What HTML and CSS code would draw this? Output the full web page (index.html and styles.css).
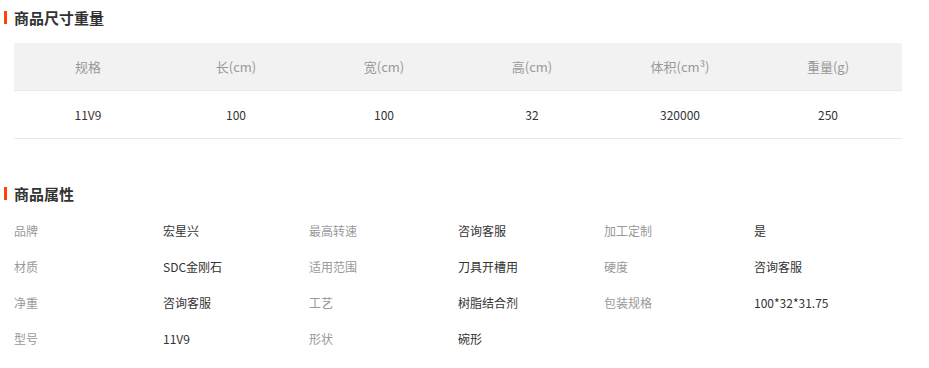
FILE: index.html
```html
<!DOCTYPE html>
<html lang="zh">
<head>
<meta charset="utf-8">
<title>商品信息</title>
<link rel="stylesheet" href="styles.css">
</head>
<body>
<section class="block">
  <h2 class="title">商品尺寸重量</h2>
  <table class="size-table">
    <thead>
      <tr><th>规格</th><th>长(cm)</th><th>宽(cm)</th><th>高(cm)</th><th>体积(cm³)</th><th>重量(g)</th></tr>
    </thead>
    <tbody>
      <tr><td>11V9</td><td>100</td><td>100</td><td>32</td><td>320000</td><td>250</td></tr>
    </tbody>
  </table>
</section>
<section class="block attrs-block">
  <h2 class="title">商品属性</h2>
  <div class="attrs">
    <span class="k">品牌</span><span class="v">宏星兴</span>
    <span class="k">最高转速</span><span class="v">咨询客服</span>
    <span class="k">加工定制</span><span class="v">是</span>
    <span class="k">材质</span><span class="v">SDC金刚石</span>
    <span class="k">适用范围</span><span class="v">刀具开槽用</span>
    <span class="k">硬度</span><span class="v">咨询客服</span>
    <span class="k">净重</span><span class="v">咨询客服</span>
    <span class="k">工艺</span><span class="v">树脂结合剂</span>
    <span class="k">包装规格</span><span class="v">100*32*31.75</span>
    <span class="k">型号</span><span class="v">11V9</span>
    <span class="k">形状</span><span class="v">碗形</span>
  </div>
</section>
</body>
</html>
```

FILE: styles.css
```css
html, body {
  margin: 0;
  padding: 0;
  background: #fff;
}
body {
  font-family: "Microsoft YaHei", "Noto Sans CJK SC", "Noto Sans", sans-serif;
  font-size: 12px;
  color: #333;
  padding: 0 27px 0 14px;
}
.block {
  margin: 0;
}
.title {
  position: relative;
  margin: 0;
  padding-top: 8px;
  height: 22px;
  line-height: 20px;
  font-size: 15px;
  font-weight: bold;
  color: #333;
}
.title::before {
  content: "";
  position: absolute;
  left: -10px;
  top: 11px;
  width: 3px;
  height: 13px;
  background: #ff4400;
}
.size-table {
  margin-top: 13px;
  width: 888px;
  border-collapse: collapse;
  table-layout: fixed;
}
.size-table th {
  height: 47px;
  padding: 0;
  background: #f2f2f2;
  font-weight: normal;
  font-size: 13px;
  color: #999;
  text-align: center;
  border-bottom: 1px solid #e8e8e8;
}
.size-table td {
  height: 47px;
  padding: 0;
  text-align: center;
  color: #333;
  border-bottom: 1px solid #e8e8e8;
}
.attrs-block {
  margin-top: 37px;
}
.attrs {
  display: grid;
  grid-template-columns: 149px 146px 149px 146px 150px 1fr;
  grid-auto-rows: 36px;
  margin-top: 6px;
  align-items: center;
}
.attrs .k {
  color: #999;
}
.attrs .v {
  color: #333;
}
```
